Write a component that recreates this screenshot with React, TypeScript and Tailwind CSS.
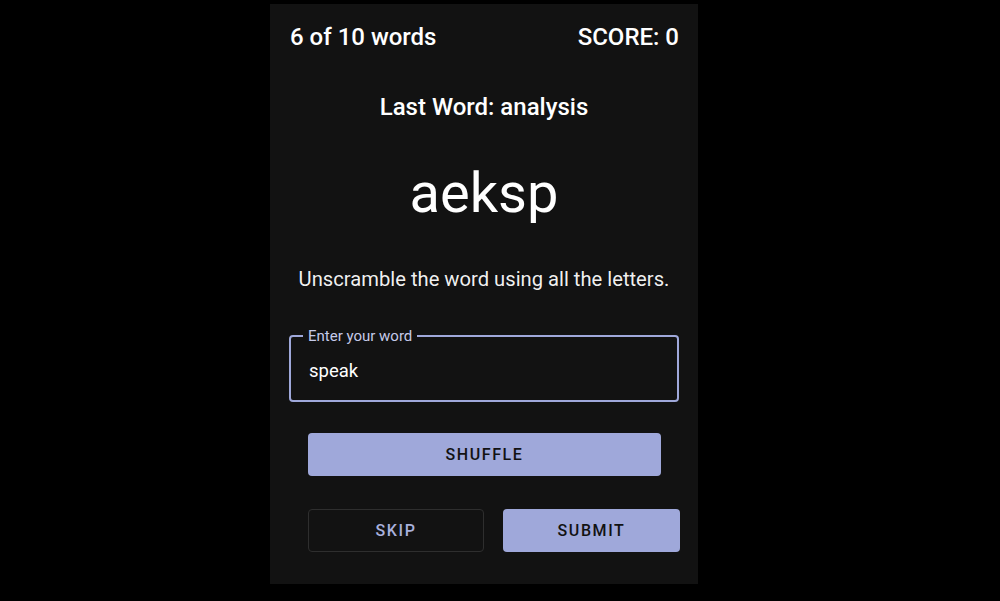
import React, { useState } from 'react';

export default function App() {
    const [word, setWord] = useState('speak');

    return (
        <div className="min-h-screen w-full bg-black pt-[4px] pl-[270px]" style={{ height: 601 }}>
            <div className="w-[428px] h-[580px] bg-[#121212] flex flex-col font-['Roboto','Liberation_Sans',sans-serif] text-white">
                {/* Header */}
                <div className="flex items-center justify-between pl-5 pr-[19px] pt-[17px]">
                    <span className="text-[24px] font-medium leading-[32px]">6 of 10 words</span>
                    <span className="text-[24px] font-medium leading-[32px]">SCORE: 0</span>
                </div>

                <p className="mt-[38px] text-center text-[24px] font-medium leading-[32px]">Last Word: analysis</p>

                <h1 className="mt-[38px] text-center text-[56px] font-normal leading-[64px]">aeksp</h1>

                <p className="mt-[40px] text-center text-[20.2px] leading-[28px] text-white/95">
                    Unscramble the word using all the letters.
                </p>

                {/* Input */}
                <fieldset className="mt-[35px] mx-[19px] h-[74px] border-2 border-[#9fa8da] rounded-[4px] px-[12px]">
                    <legend className="px-[5px] text-[15px] leading-[16px] text-[#c5cae9]">Enter your word</legend>
                    <input
                        value={word}
                        onChange={e => setWord(e.target.value)}
                        className="w-full bg-transparent outline-none text-[18.5px] text-white mt-[14px] pl-[6px]"
                    />
                </fieldset>

                {/* Buttons */}
                <div className="pl-[38px] mt-[31px]">
                    <button className="w-[353px] h-[43px] rounded-[4px] bg-[#9fa8da] text-[#121212] text-[16px] font-medium tracking-[0.1em] pt-[1px]">
                        SHUFFLE
                    </button>
                </div>

                <div className="flex gap-[19px] pl-[38px] mt-[33px]">
                    <button className="flex-none w-[176px] h-[43px] rounded-[4px] border border-[#2e2e2e] text-[#a8b0dc] text-[16px] font-medium tracking-[0.1em] pt-[1px]">
                        SKIP
                    </button>
                    <button className="flex-none w-[177px] h-[43px] rounded-[4px] bg-[#9fa8da] text-[#121212] text-[16px] font-medium tracking-[0.1em] pt-[1px]">
                        SUBMIT
                    </button>
                </div>
            </div>
        </div>
    );
}
